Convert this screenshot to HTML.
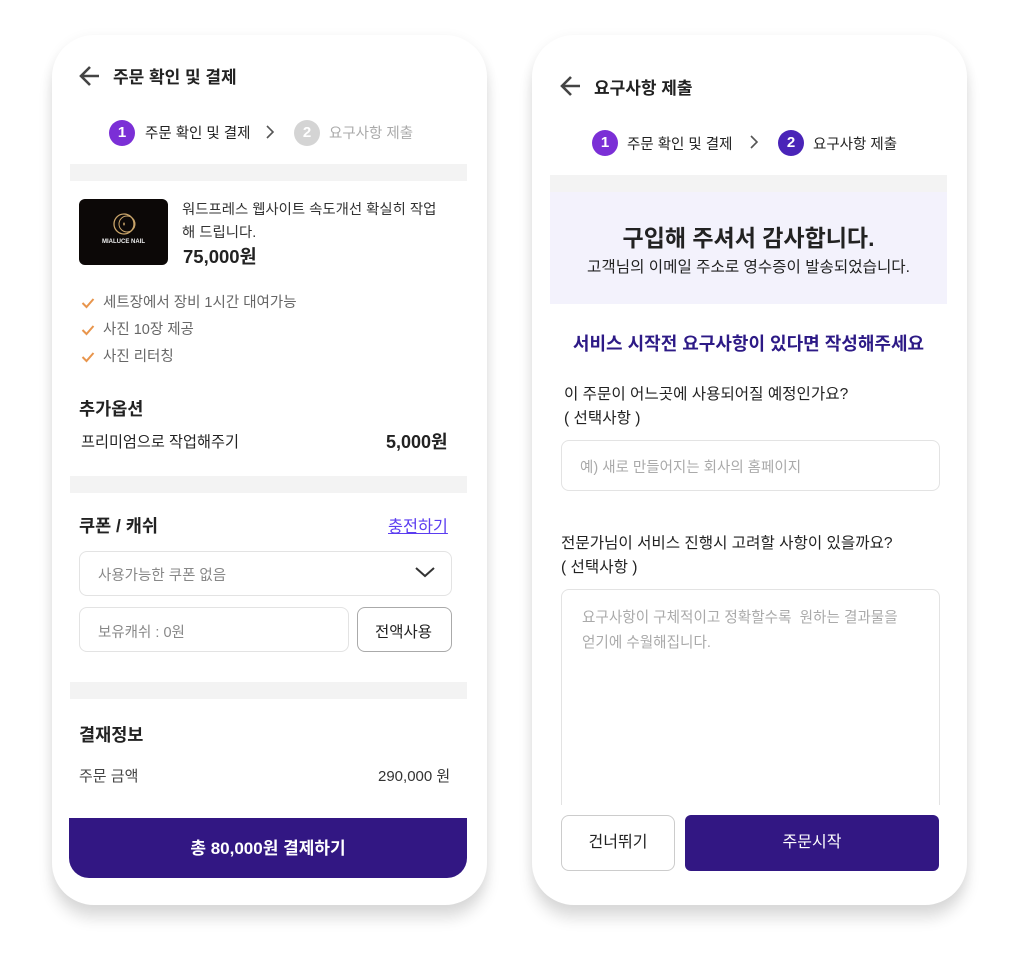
<!DOCTYPE html>
<html><head><meta charset="utf-8"><style>
*{margin:0;padding:0;box-sizing:border-box}
body{width:1018px;height:954px;background:#fff;position:relative;overflow:hidden;font-family:"Liberation Sans","Noto Sans CJK KR",sans-serif;color:#222}
.card{position:absolute;top:35px;width:435px;height:870px;background:#fff;border-radius:42px;box-shadow:0 14px 14px rgba(0,0,0,.12),0 2px 12px rgba(0,0,0,.06)}
.a{position:absolute;white-space:nowrap}
.gray{position:absolute;background:#f3f3f3;height:17px}
.circ{position:absolute;width:26px;height:26px;border-radius:50%;color:#fff;font-size:15px;font-weight:bold;text-align:center;line-height:26px}
.box{position:absolute;border:1.5px solid #e3e3e3;border-radius:8px;background:#fff}
.chk{position:absolute;left:81px}
</style></head><body>
<div class="card" style="left:52px"></div>
<div class="card" style="left:532px"></div>

<!-- LEFT -->
<svg class="a" style="left:78px;top:64px" width="24" height="24" viewBox="0 0 24 24"><path d="M21 12H4M12 3L3 12l9 9" fill="none" stroke="#444" stroke-width="2.6"/></svg>
<div class="a" style="left:113px;top:63px;font-size:17px;font-weight:bold">주문 확인 및 결제</div>
<div class="circ" style="left:109px;top:120px;background:#7b2fd6">1</div>
<div class="a" style="left:145px;top:122px;font-size:14.5px;color:#222">주문 확인 및 결제</div>
<svg class="a" style="left:264px;top:124px" width="12" height="16"><path d="M3 2l6 6-6 6" fill="none" stroke="#555" stroke-width="1.6"/></svg>
<div class="circ" style="left:294px;top:120px;background:#d4d4d4">2</div>
<div class="a" style="left:329px;top:122px;font-size:14.5px;color:#aaa">요구사항 제출</div>
<div class="gray" style="left:70px;top:164px;width:397px"></div>
<div class="a" style="left:79px;top:199px;width:89px;height:66px;background:#0c0807;border-radius:6px">
<svg style="position:absolute;left:33px;top:13px" width="24" height="24"><circle cx="12" cy="12" r="10" fill="none" stroke="#c9a46a" stroke-width="1.3"/><circle cx="15" cy="12" r="8" fill="none" stroke="#c9a46a" stroke-width="1"/><path d="M12 10l1 2-1 2-1-2z" fill="#c9a46a"/></svg>
<div style="position:absolute;left:0;width:89px;top:40px;text-align:center;color:#eee;font-size:6px;font-weight:bold">MIALUCE NAIL</div></div>
<div class="a" style="left:182px;top:199px;font-size:14.4px;line-height:23px;color:#333">워드프레스 웹사이트 속도개선 확실히 작업<br>해 드립니다.</div>
<div class="a" style="left:183px;top:243px;font-size:18.5px;font-weight:bold">75,000원</div>
<svg class="chk" style="top:297px" width="14" height="12"><path d="M1.5 6l4 4 7-8" fill="none" stroke="#e8954c" stroke-width="2"/></svg>
<svg class="chk" style="top:324px" width="14" height="12"><path d="M1.5 6l4 4 7-8" fill="none" stroke="#e8954c" stroke-width="2"/></svg>
<svg class="chk" style="top:351px" width="14" height="12"><path d="M1.5 6l4 4 7-8" fill="none" stroke="#e8954c" stroke-width="2"/></svg>
<div class="a" style="left:103px;top:290px;font-size:14.5px;line-height:27px;color:#666">세트장에서 장비 1시간 대여가능<br>사진 10장 제공<br>사진 리터칭</div>
<div class="a" style="left:79px;top:396px;font-size:17.5px;font-weight:bold">추가옵션</div>
<div class="a" style="left:81px;top:430px;font-size:15.2px;color:#222">프리미엄으로 작업해주기</div>
<div class="a" style="left:386px;top:428px;font-size:18px;font-weight:bold">5,000원</div>
<div class="gray" style="left:70px;top:476px;width:397px"></div>
<div class="a" style="left:79px;top:513px;font-size:17.5px;font-weight:bold">쿠폰 / 캐쉬</div>
<div class="a" style="left:388px;top:513px;font-size:16.3px;color:#5b3df0;text-decoration:underline">충전하기</div>
<div class="box" style="left:79px;top:551px;width:373px;height:45px"></div>
<div class="a" style="left:98px;top:564px;font-size:14.5px;color:#888">사용가능한 쿠폰 없음</div>
<svg class="a" style="left:414px;top:565px" width="22" height="14"><path d="M2 3l9 8 9-8" fill="none" stroke="#333" stroke-width="2"/></svg>
<div class="box" style="left:79px;top:607px;width:270px;height:45px"></div>
<div class="a" style="left:98px;top:621px;font-size:14.5px;color:#888">보유캐쉬 : 0원</div>
<div class="box" style="left:357px;top:607px;width:95px;height:45px;border-color:#aaa"></div>
<div class="a" style="left:375px;top:620px;font-size:15.5px;color:#222">전액사용</div>
<div class="gray" style="left:70px;top:682px;width:397px"></div>
<div class="a" style="left:79px;top:722px;font-size:17.5px;font-weight:bold">결재정보</div>
<div class="a" style="left:79px;top:765px;font-size:15px;color:#444">주문 금액</div>
<div class="a" style="left:378px;top:765px;font-size:15px;color:#333">290,000 원</div>
<div class="a" style="left:69px;top:818px;width:398px;height:60px;background:#321783;border-radius:0 0 20px 20px;color:#fff;font-size:17px;font-weight:bold;text-align:center;line-height:62px">총 80,000원 결제하기</div>

<!-- RIGHT -->
<svg class="a" style="left:559px;top:74px" width="24" height="24" viewBox="0 0 24 24"><path d="M21 12H4M12 3L3 12l9 9" fill="none" stroke="#444" stroke-width="2.6"/></svg>
<div class="a" style="left:594px;top:74px;font-size:17px;font-weight:bold">요구사항 제출</div>
<div class="circ" style="left:592px;top:130px;background:#7b2fd6">1</div>
<div class="a" style="left:627px;top:133px;font-size:14.5px;color:#222">주문 확인 및 결제</div>
<svg class="a" style="left:748px;top:134px" width="12" height="16"><path d="M3 2l6 6-6 6" fill="none" stroke="#555" stroke-width="1.6"/></svg>
<div class="circ" style="left:778px;top:130px;background:#4a24b8">2</div>
<div class="a" style="left:813px;top:133px;font-size:14.5px;color:#222">요구사항 제출</div>
<div class="gray" style="left:550px;top:175px;width:397px"></div>
<div class="a" style="left:550px;top:192px;width:397px;height:112px;background:#f3f2fc"></div>
<div class="a" style="left:550px;top:219px;width:397px;text-align:center;font-size:23px;font-weight:bold">구입해 주셔서 감사합니다.</div>
<div class="a" style="left:550px;top:255px;width:397px;text-align:center;font-size:15.6px;color:#222">고객님의 이메일 주소로 영수증이 발송되었습니다.</div>
<div class="a" style="left:550px;top:330px;width:397px;text-align:center;font-size:18px;font-weight:bold;color:#2d1a86">서비스 시작전 요구사항이 있다면 작성해주세요</div>
<div class="a" style="left:564px;top:383px;font-size:15.6px;line-height:24px;color:#222">이 주문이 어느곳에 사용되어질 예정인가요?<br>( 선택사항 )</div>
<div class="box" style="left:561px;top:440px;width:379px;height:51px"></div>
<div class="a" style="left:580px;top:456px;font-size:14.5px;color:#aaa">예) 새로 만들어지는 회사의 홈페이지</div>
<div class="a" style="left:561px;top:532px;font-size:15.6px;line-height:24px;color:#222">전문가님이 서비스 진행시 고려할 사항이 있을까요?<br>( 선택사항 )</div>
<div class="box" style="left:561px;top:589px;width:379px;height:240px;border-bottom:none;border-radius:8px 8px 0 0"></div>
<div class="a" style="left:582px;top:606px;font-size:14.6px;line-height:25px;color:#aaa">요구사항이 구체적이고 정확할수록&nbsp; 원하는 결과물을<br>얻기에 수월해집니다.</div>
<div class="a" style="left:550px;top:805px;width:397px;height:80px;background:#fff"></div>
<div class="box" style="left:561px;top:815px;width:114px;height:56px;border-color:#ccc;text-align:center;line-height:54px;font-size:16px;color:#222">건너뛰기</div>
<div class="a" style="left:685px;top:815px;width:254px;height:56px;background:#321783;border-radius:6px;color:#fff;font-size:16px;text-align:center;line-height:56px">주문시작</div>
</body></html>
